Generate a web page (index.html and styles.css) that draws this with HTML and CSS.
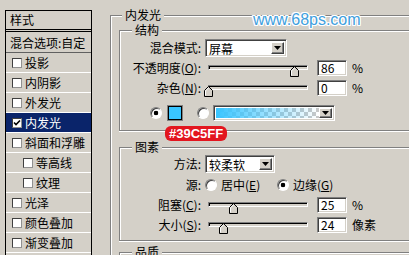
FILE: index.html
```html
<!DOCTYPE html>
<html lang="zh-CN">
<head>
	<meta charset="UTF-8">
	<title>图层样式 - 内发光</title>
	<link rel="stylesheet" href="styles.css">
</head>
<body>
	<div id="dialog">
		<div id="stylelist">
			<div class="head">样式</div>
			<div class="blend">混合选项:自定</div>
			<div class="item"><span class="chk"></span>投影</div>
			<div class="item"><span class="chk"></span>内阴影</div>
			<div class="item"><span class="chk"></span>外发光</div>
			<div class="item on"><span class="chk"><svg width="8" height="8" viewBox="0 0 8 8"><path d="M1 3.5L3 5.5L7 1.5" fill="none" stroke="#000" stroke-width="1.6"/></svg></span>内发光</div>
			<div class="item"><span class="chk"></span>斜面和浮雕</div>
			<div class="item sub"><span class="chk"></span>等高线</div>
			<div class="item sub"><span class="chk"></span>纹理</div>
			<div class="item"><span class="chk"></span>光泽</div>
			<div class="item"><span class="chk"></span>颜色叠加</div>
			<div class="item"><span class="chk"></span>渐变叠加</div>
		</div>

		<div id="panel">
			<fieldset class="group outer">
				<legend>内发光</legend>

				<fieldset class="group">
					<legend>结构</legend>
					<div class="form struct">
						<span class="lbl">混合模式:</span>
						<div class="select mode"><span class="val">屏幕</span><span class="drop"><svg width="7" height="4"><path d="M0 0h7L3.5 4z"/></svg></span></div>

						<span class="lbl">不透明度(<u>O</u>):</span>
						<div class="slider"><div class="track"></div><svg class="thumb" style="left:85px" width="9" height="11" viewBox="0 0 9 11"><path d="M0.5 10.5V4.5L4.5 0.5L8.5 4.5V10.5Z" fill="#D4D0C8" stroke="#000"/><path d="M1.5 9.5V4.9L4.5 1.9" fill="none" stroke="#fff"/></svg></div>
						<div class="num">86</div>
						<span class="unit">%</span>

						<span class="lbl">杂色(<u>N</u>):</span>
						<div class="slider"><div class="track"></div><svg class="thumb" style="left:-1px" width="9" height="11" viewBox="0 0 9 11"><path d="M0.5 10.5V4.5L4.5 0.5L8.5 4.5V10.5Z" fill="#D4D0C8" stroke="#000"/><path d="M1.5 9.5V4.9L4.5 1.9" fill="none" stroke="#fff"/></svg></div>
						<div class="num">0</div>
						<span class="unit">%</span>

						<div class="colors">
							<span class="radio on"></span>
							<span class="swatch"></span>
							<span class="radio second"></span>
							<div class="grad"><span class="ramp"></span><span class="drop"><svg width="7" height="4"><path d="M0 0h7L3.5 4z"/></svg></span></div>
						</div>
					</div>
				</fieldset>

				<fieldset class="group">
					<legend>图素</legend>
					<div class="form elem">
						<span class="lbl">方法:</span>
						<div class="select method"><span class="val">较柔软</span><span class="drop"><svg width="7" height="4"><path d="M0 0h7L3.5 4z"/></svg></span></div>

						<span class="lbl">源:</span>
						<div class="opts">
							<div class="opt"><span class="radio"></span><span>居中(<u>E</u>)</span></div>
							<div class="opt"><span class="radio on"></span><span>边缘(<u>G</u>)</span></div>
						</div>

						<span class="lbl">阻塞(<u>C</u>):</span>
						<div class="slider"><div class="track"></div><svg class="thumb" style="left:24px" width="9" height="11" viewBox="0 0 9 11"><path d="M0.5 10.5V4.5L4.5 0.5L8.5 4.5V10.5Z" fill="#D4D0C8" stroke="#000"/><path d="M1.5 9.5V4.9L4.5 1.9" fill="none" stroke="#fff"/></svg></div>
						<div class="num">25</div>
						<span class="unit">%</span>

						<span class="lbl">大小(<u>S</u>):</span>
						<div class="slider"><div class="track"></div><svg class="thumb" style="left:14px" width="9" height="11" viewBox="0 0 9 11"><path d="M0.5 10.5V4.5L4.5 0.5L8.5 4.5V10.5Z" fill="#D4D0C8" stroke="#000"/><path d="M1.5 9.5V4.9L4.5 1.9" fill="none" stroke="#fff"/></svg></div>
						<div class="num">24</div>
						<span class="unit">像素</span>
					</div>
				</fieldset>

				<fieldset class="group quality">
					<legend>品质</legend>
				</fieldset>
			</fieldset>
		</div>
	</div>

	<div class="mark">www.68ps.com</div>
	<div class="tag">#39C5FF</div>
</body>
</html>
```

FILE: styles.css
```css
*{
	margin: 0;
	padding: 0;
	box-sizing: border-box;
}
body{
	position: relative;
	width: 409px;
	height: 255px;
	overflow: hidden;
	background-color: #D4D0C8;
	font: 12px/14px "Noto Sans CJK SC", sans-serif;
	color: #000;
}
#dialog{
	display: flex;
	align-items: flex-start;
	height: 255px;
	overflow: hidden;
	padding: 8px 0 0 5px;
}

/* 左侧样式列表 */
#stylelist{
	width: 87px;
	height: 247px;
	margin-top: 2px;
	border: 1px solid #000;
	border-bottom: none;
}
#stylelist .head{
	height: 21px;
	line-height: 18px;
	padding-left: 4px;
	border-bottom: 3px double #000;
}
#stylelist .blend{
	height: 21px;
	line-height: 21px;
	padding-left: 4px;
	border-bottom: 1px solid #606060;
}
#stylelist .item{
	display: flex;
	align-items: center;
	height: 20px;
	padding: 1px 0 0 6px;
	border-bottom: 1px solid #fff;
}
#stylelist .item.sub{
	padding-left: 17px;
}
#stylelist .item.on{
	background-color: #0A246A;
	color: #fff;
}
.chk{
	display: flex;
	align-items: center;
	justify-content: center;
	width: 10px;
	height: 10px;
	margin-right: 3px;
	background-color: #fff;
	border: 1px solid;
	border-color: #404040 #909090 #909090 #404040;
}

/* 右侧分组 */
#panel{
	flex: 1;
	margin-left: 18px;
}
.group{
	border: 1px solid #808080;
	border-right: none;
	box-shadow: inset 1px 1px #fff, 0 1px #fff;
	padding: 0;
	min-width: 0;
}
.group legend{
	margin-left: 12px;
	padding: 0 3px;
	background-color: #D4D0C8;
	line-height: 14px;
}
.group.outer{
	border-bottom: none;
	box-shadow: inset 1px 1px #fff;
	padding-left: 8px;
	height: 260px;
}
.group.outer > legend{
	margin-left: 3px;
}
.group.outer > .group{
	margin-top: 9px;
}
.group.outer > .group:first-of-type{
	margin-top: 1px;
}
.group.outer > .group.quality{
	margin-top: 4px;
	height: 20px;
}

.form{
	display: grid;
	grid-template-columns: 85px 112px 35px 1fr;
	align-items: center;
}
.form.struct{
	grid-template-rows: 20px 20px 20px 25px;
	padding: 1px 0 7px;
}
.form.elem{
	grid-template-rows: 20px 21px 20px 20px;
	padding: 0 0 5px;
}
.lbl{
	padding-right: 4px;
	text-align: right;
	white-space: nowrap;
}
.unit{
	white-space: nowrap;
}
u{
	text-decoration: underline;
	text-underline-offset: 1px;
}

/* 控件 */
.select,
.num,
.grad{
	border: 1px solid;
	border-color: #808080 #fff #fff #808080;
	box-shadow: inset 1px 1px #404040, inset -1px -1px #D4D0C8;
}
.select{
	display: flex;
	height: 18px;
	padding: 2px;
	background-color: #fff;
	justify-self: start;
	grid-column: span 3;
}
.select.mode{
	width: 82px;
}
.select.method{
	width: 70px;
}
.select .val{
	flex: 1;
	padding-left: 1px;
	line-height: 13px;
}
.drop{
	display: flex;
	align-items: center;
	justify-content: center;
	width: 13px;
	background-color: #D4D0C8;
	border: 1px solid;
	border-color: #fff #404040 #404040 #fff;
	box-shadow: inset -1px -1px #808080;
}
.num{
	width: 30px;
	height: 16px;
	padding: 1px 0 0 3px;
	background-color: #fff;
	line-height: 12px;
}
.slider{
	position: relative;
	width: 106px;
	height: 20px;
}
.track{
	height: 5px;
	margin: 7px 3px 0;
	border: 1px solid;
	border-color: #808080 #fff #fff #808080;
	box-shadow: inset 1px 1px #000;
}
.thumb{
	position: absolute;
	top: 8px;
}

.colors{
	grid-column: 1 / -1;
	align-self: end;
	display: flex;
	align-items: center;
	height: 20px;
	padding-left: 30px;
}
.radio{
	display: inline-block;
	width: 12px;
	height: 12px;
	border-radius: 50%;
	background: #fff;
	border: 1px solid;
	border-color: #808080 #fff #fff #808080;
	box-shadow: inset 1px 1px #404040;
}
.radio.on{
	background: radial-gradient(circle, #000 0 2px, #fff 2.6px);
}
.swatch{
	width: 14px;
	height: 14px;
	margin-left: 6px;
	background-color: #39C5FF;
	border: 1px solid #000;
	box-shadow: 0 0 0 1px #808080;
}
.radio.second{
	margin-left: 15px;
}
.grad{
	display: flex;
	width: 122px;
	height: 16px;
	margin-left: 4px;
	padding: 2px;
	background-color: #fff;
}
.ramp{
	flex: 1;
	background:
		linear-gradient(to right, #39C5FF, rgba(57, 197, 255, 0)),
		repeating-conic-gradient(#C8C8C8 0 25%, #fff 0 50%) 0 0 / 8px 8px;
}

.opts{
	grid-column: 2 / -1;
	display: flex;
	align-items: center;
}
.opt{
	display: flex;
	align-items: center;
	width: 72px;
}
.opt span + span{
	margin-left: 4px;
}

/* 水印和标注 */
.mark{
	position: absolute;
	left: 253px;
	top: 11px;
	font: 16px/18px "Liberation Sans", Arial, sans-serif;
	color: #3FA0DE;
	text-shadow: 1px 0 #fff, -1px 0 #fff, 0 1px #fff, 0 -1px #fff, 1px 1px #fff, -1px -1px #fff, 1px -1px #fff, -1px 1px #fff;
}
.tag{
	position: absolute;
	left: 165px;
	top: 126px;
	height: 15px;
	padding: 0 4px;
	border-radius: 6px;
	background-color: #E3161F;
	color: #fff;
	font: bold 13px/15px "Liberation Sans", Arial, sans-serif;
}
```
